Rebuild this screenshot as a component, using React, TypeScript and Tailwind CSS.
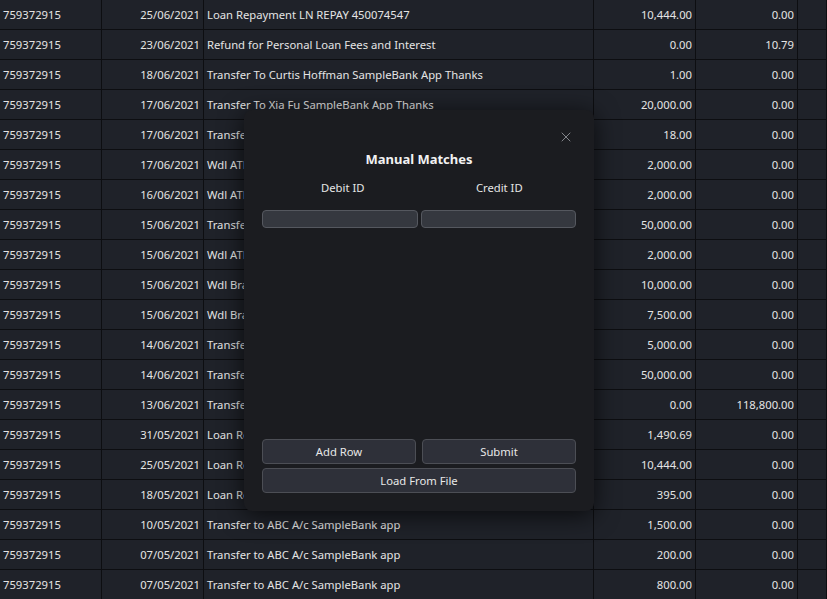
import { X } from "lucide-react";

type Row = {
  account: string;
  date: string;
  description: string;
  debit: string;
  credit: string;
};

const rows: Row[] = [
  { account: "759372915", date: "25/06/2021", description: "Loan Repayment LN REPAY 450074547", debit: "10,444.00", credit: "0.00" },
  { account: "759372915", date: "23/06/2021", description: "Refund for Personal Loan Fees and Interest", debit: "0.00", credit: "10.79" },
  { account: "759372915", date: "18/06/2021", description: "Transfer To Curtis Hoffman SampleBank App Thanks", debit: "1.00", credit: "0.00" },
  { account: "759372915", date: "17/06/2021", description: "Transfer To Xia Fu SampleBank App Thanks", debit: "20,000.00", credit: "0.00" },
  { account: "759372915", date: "17/06/2021", description: "Transfer To Sam Lee SampleBank App Thanks", debit: "18.00", credit: "0.00" },
  { account: "759372915", date: "17/06/2021", description: "Wdl ATM SampleBank Central Station", debit: "2,000.00", credit: "0.00" },
  { account: "759372915", date: "16/06/2021", description: "Wdl ATM SampleBank Central Station", debit: "2,000.00", credit: "0.00" },
  { account: "759372915", date: "15/06/2021", description: "Transfer To Savings SampleBank App", debit: "50,000.00", credit: "0.00" },
  { account: "759372915", date: "15/06/2021", description: "Wdl ATM SampleBank Central Station", debit: "2,000.00", credit: "0.00" },
  { account: "759372915", date: "15/06/2021", description: "Wdl Branch SampleBank City", debit: "10,000.00", credit: "0.00" },
  { account: "759372915", date: "15/06/2021", description: "Wdl Branch SampleBank City", debit: "7,500.00", credit: "0.00" },
  { account: "759372915", date: "14/06/2021", description: "Transfer To Savings SampleBank App", debit: "5,000.00", credit: "0.00" },
  { account: "759372915", date: "14/06/2021", description: "Transfer To Savings SampleBank App", debit: "50,000.00", credit: "0.00" },
  { account: "759372915", date: "13/06/2021", description: "Transfer From Savings SampleBank App", debit: "0.00", credit: "118,800.00" },
  { account: "759372915", date: "31/05/2021", description: "Loan Repayment LN REPAY 450074547", debit: "1,490.69", credit: "0.00" },
  { account: "759372915", date: "25/05/2021", description: "Loan Repayment LN REPAY 450074547", debit: "10,444.00", credit: "0.00" },
  { account: "759372915", date: "18/05/2021", description: "Loan Repayment LN REPAY 450074547", debit: "395.00", credit: "0.00" },
  { account: "759372915", date: "10/05/2021", description: "Transfer to ABC A/c SampleBank app", debit: "1,500.00", credit: "0.00" },
  { account: "759372915", date: "07/05/2021", description: "Transfer to ABC A/c SampleBank app", debit: "200.00", credit: "0.00" },
  { account: "759372915", date: "07/05/2021", description: "Transfer to ABC A/c SampleBank app", debit: "800.00", credit: "0.00" },
];

const cell = "flex h-[30px] items-center border-r border-b border-[#0d0e11] px-[3px] pt-[2px] whitespace-nowrap overflow-hidden";

function ManualMatchesDialog() {
  return (
    <div className="absolute left-[244px] top-[110px] flex h-[401px] w-[350px] flex-col rounded-lg bg-[#1b1c20] px-[18px] pb-[18px] shadow-[0_4px_24px_rgba(0,0,0,0.7)]">
      <div className="flex justify-end pt-[19px] pr-[2px]">
        <X className="h-[16px] w-[16px] text-[#8b8d92]" strokeWidth={1.4} />
      </div>

      <h2 className="mt-[5px] text-center text-[13px] font-bold leading-[18px] text-[#f2f2f2]">Manual Matches</h2>

      <div className="mt-[12px] flex gap-[3px] pl-[4px] text-[11.25px] leading-[16px] text-[#e6e6e6]">
        <span className="flex-1 text-center">Debit ID</span>
        <span className="flex-1 text-center">Credit ID</span>
      </div>

      <div className="mt-[14px] flex gap-[3px]">
        <div className="h-[18px] flex-1 rounded-[4px] border border-[#55585f] bg-[#35383f]" />
        <div className="h-[18px] flex-1 rounded-[4px] border border-[#55585f] bg-[#35383f]" />
      </div>

      <div className="flex-1" />

      <div className="flex gap-[6px]">
        <button className="h-[25px] flex-1 rounded-[4px] border border-[#4c4e55] bg-[#2e3039] pt-[1px] text-[11.25px] text-[#e8e8e8]">Add Row</button>
        <button className="h-[25px] flex-1 rounded-[4px] border border-[#4c4e55] bg-[#2e3039] pt-[1px] text-[11.25px] text-[#e8e8e8]">Submit</button>
      </div>
      <button className="mt-[4px] h-[25px] w-full rounded-[4px] border border-[#4c4e55] bg-[#2e3039] pt-[1px] text-[11.25px] text-[#e8e8e8]">
        Load From File
      </button>
    </div>
  );
}

export default function App() {
  return (
    <div className="relative h-[599px] w-[827px] overflow-hidden bg-[#1f2229] font-['Noto_Sans',sans-serif] text-[11.25px] text-[#e4e4e4]">
      <div className="grid grid-cols-[102px_102px_390px_102px_102px_1fr]">
        {rows.map((row, i) => (
          <div key={i} className="contents">
            <div className={cell}>{row.account}</div>
            <div className={`${cell} justify-end`}>{row.date}</div>
            <div className={cell}>{row.description}</div>
            <div className={`${cell} justify-end`}>{row.debit}</div>
            <div className={`${cell} justify-end`}>{row.credit}</div>
            <div className={cell} />
          </div>
        ))}
      </div>

      <ManualMatchesDialog />
    </div>
  );
}
